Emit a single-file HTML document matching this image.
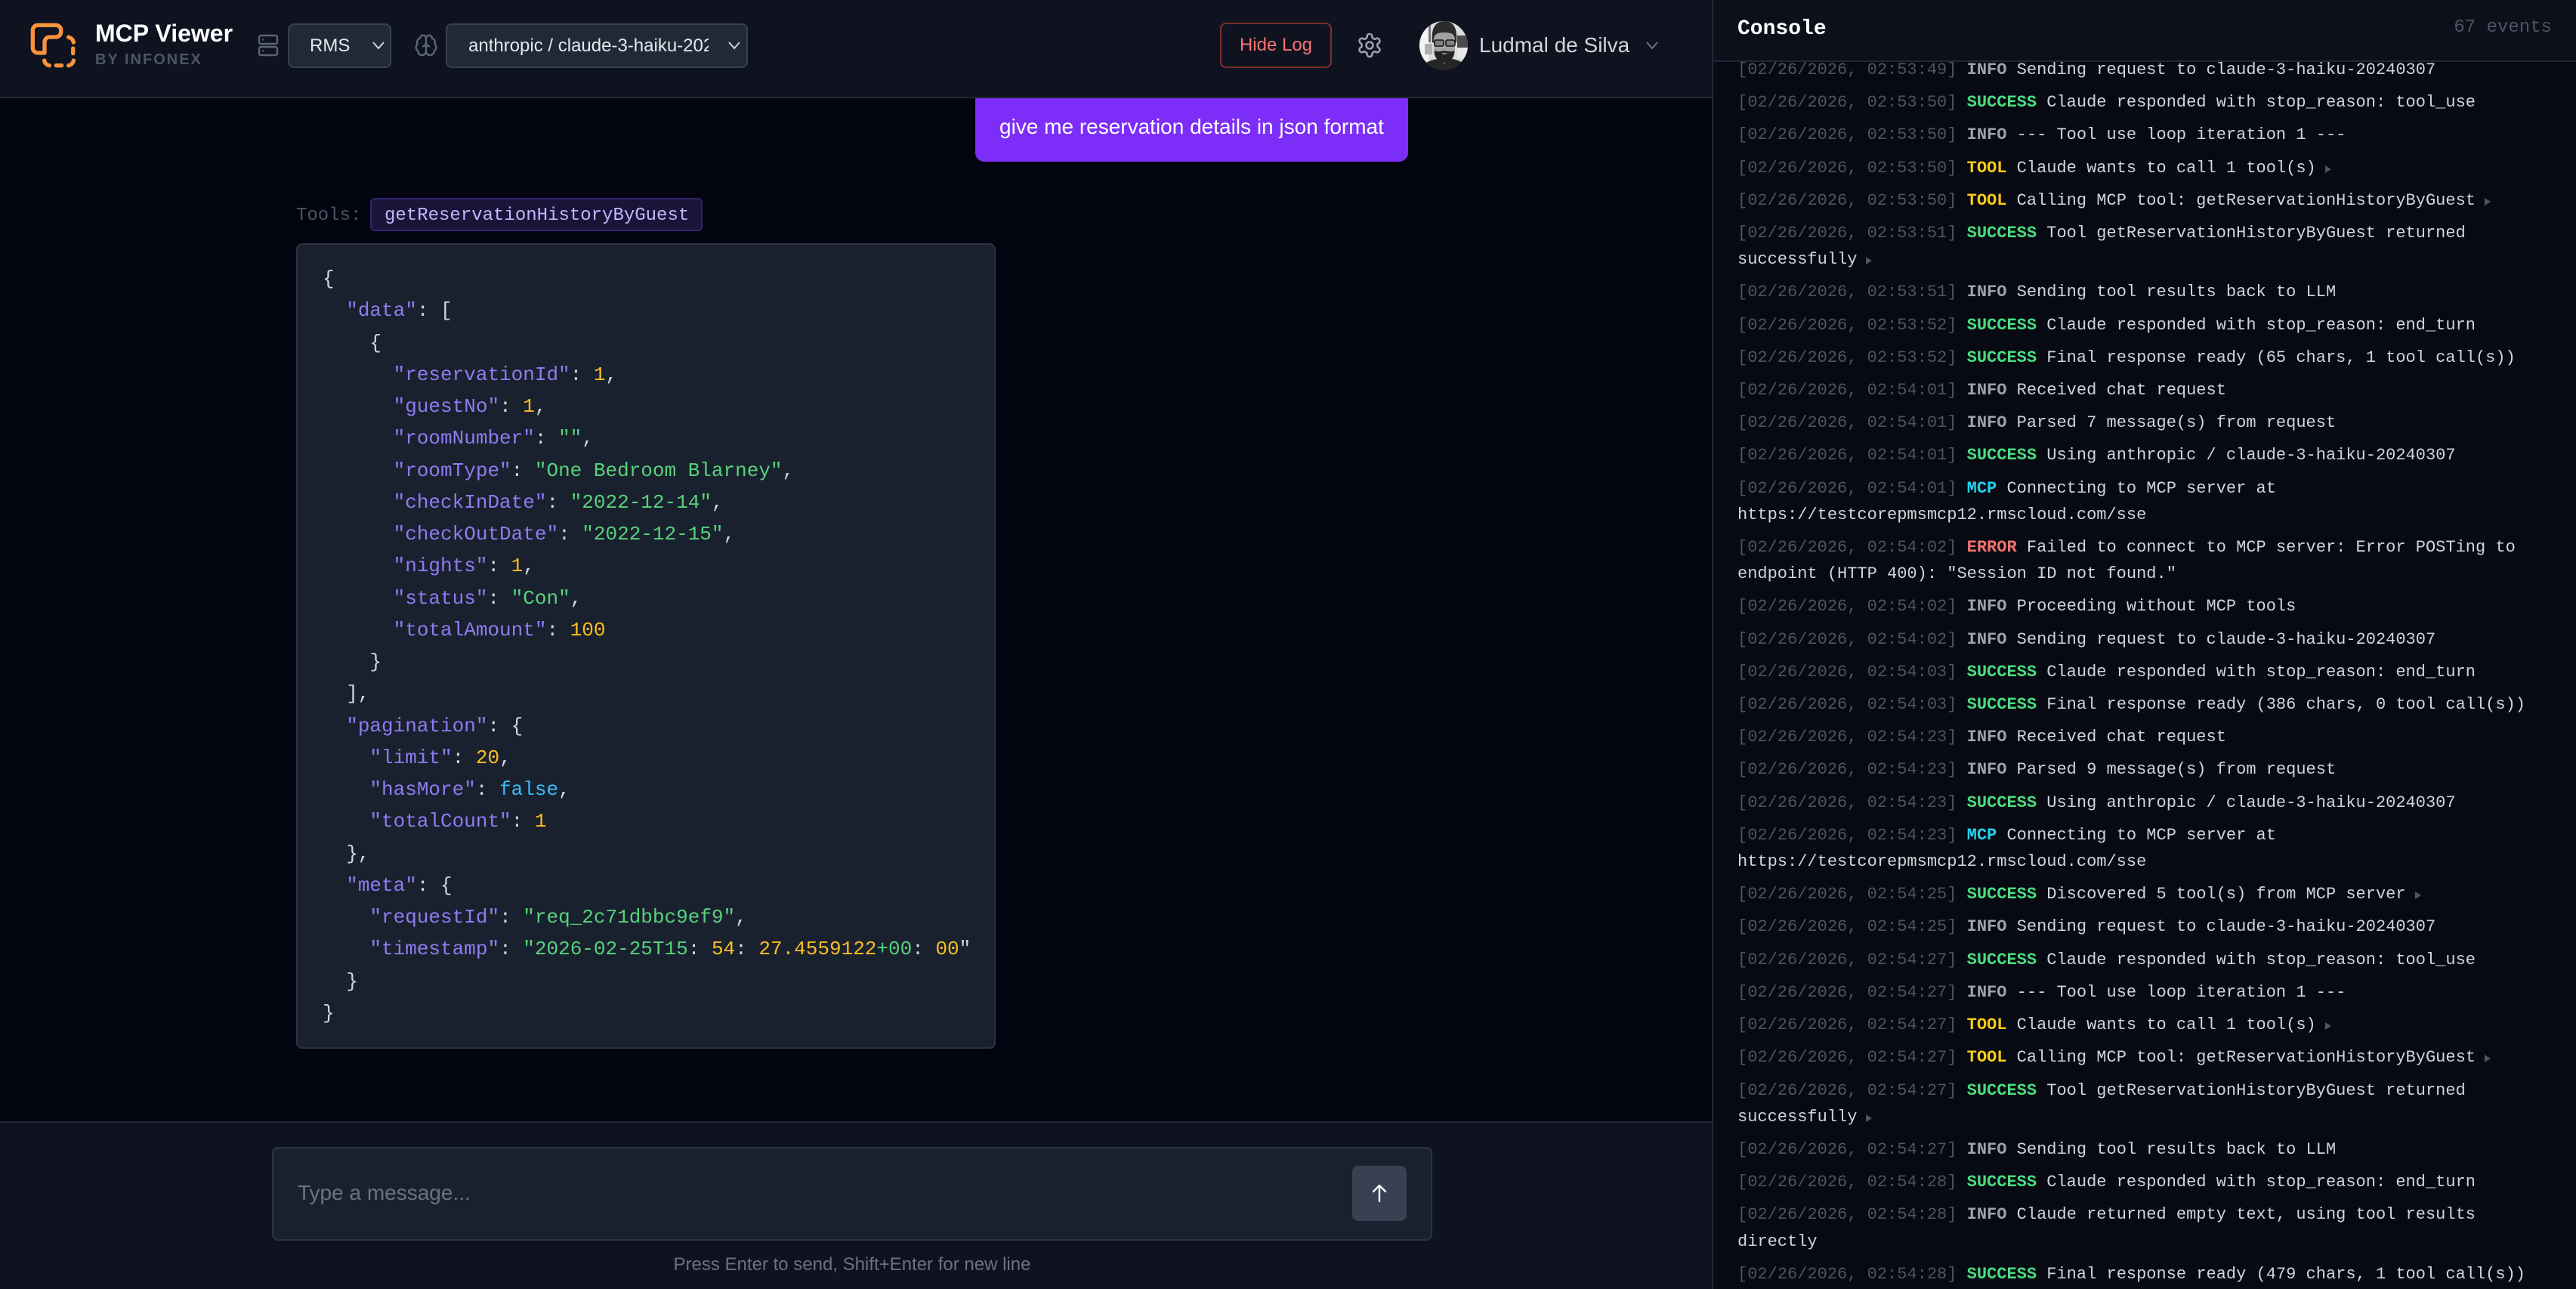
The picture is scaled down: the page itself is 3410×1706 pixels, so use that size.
<!DOCTYPE html>
<html><head><meta charset="utf-8"><style>
*{box-sizing:border-box;margin:0;padding:0}
html,body{width:3410px;height:1706px;overflow:hidden;background:#02040f;font-family:"Liberation Sans",sans-serif}
.a{position:absolute}
.m{font-family:"Liberation Mono",monospace}
.sel{position:absolute;top:31px;height:59px;background:#1f2937;border:2px solid #374151;border-radius:8px;color:#e5e7eb;font-size:24px;line-height:55px;overflow:hidden;white-space:nowrap}
pre{font-family:"Liberation Mono",monospace;font-size:26px;line-height:42.25px;color:#d1d5db}
pre i{font-style:normal;color:#8f7bf2}
pre s{text-decoration:none;color:#57d27d}
pre b{font-weight:normal;color:#fbbf24}
pre u{text-decoration:none;color:#38bdf8}
#log{position:absolute;left:2300px;top:82px;width:1078px;height:1624px;overflow:hidden;font-family:"Liberation Mono",monospace;font-size:22px;line-height:35.2px;color:#d1d5db}
#log div{margin-bottom:8px}
#log div:first-child{margin-top:-7px}
#log em{font-style:normal;color:#4b5563}
#log b{font-weight:bold}
.I{color:#9ca3af}.S{color:#4ade80}.T{color:#facc15}.M{color:#22d3ee}.E{color:#f87171}
.t{display:inline-block;width:0;height:0;border-left:8px solid #4b5563;border-top:5px solid transparent;border-bottom:5px solid transparent;margin-left:12px;vertical-align:-1px}
</style></head><body>

<div class="a" style="left:0;top:0;width:2266px;height:130px;background:#0f1320;border-bottom:2px solid #1f2937"></div>
<div class="a" style="left:0;top:1484px;width:2266px;height:222px;background:#0f1320;border-top:2px solid #1f2937"></div>

<svg class="a" style="left:20px;top:10px" width="120" height="100" viewBox="0 0 360 300" fill="none" stroke="#fb923c" stroke-width="16" stroke-linecap="round" stroke-linejoin="round">
<path d="M117 180H90a20 20 0 0 1-20-20V90a20 20 0 0 1 20-20h72a20 20 0 0 1 20 20v7a20 20 0 0 1-20 20h-25a20 20 0 0 0-20 20z"/>
<path d="M212 118a24 24 0 0 1 20 20M230 162v20M232 210a24 24 0 0 1-20 20M185 230h-22M136 230a24 24 0 0 1-20-20"/>
</svg>
<div class="a" style="left:126px;top:25px;font-size:32px;line-height:38px;font-weight:bold;color:#fff;white-space:nowrap">MCP Viewer</div>
<div class="a" style="left:126px;top:67px;font-size:20px;line-height:24px;font-weight:bold;color:#4b5563;letter-spacing:2px;white-space:nowrap">BY INFONEX</div>

<svg class="a" style="left:340px;top:44px" width="30" height="32" viewBox="0 0 30 32" fill="none" stroke="#5b6472" stroke-width="2.4" stroke-linecap="round">
<rect x="3" y="3" width="24" height="11" rx="2.5"/><rect x="3" y="18" width="24" height="11" rx="2.5"/><path d="M8 8.5h.01M8 23.5h.01"/>
</svg>
<div class="sel" style="left:381px;width:137px;padding-left:27px">RMS</div>
<svg class="a" style="left:491px;top:50px" width="20" height="20" viewBox="0 0 20 20" fill="none" stroke="#d1d5db" stroke-width="2"><path d="M3 6l7 8 7-8"/></svg>

<svg class="a" style="left:548px;top:44px" width="32" height="32" viewBox="0 0 24 24" fill="none" stroke="#5b6472" stroke-width="1.8" stroke-linecap="round" stroke-linejoin="round">
<path d="M12 18V5a3 3 0 1 0-6 .1 4 4 0 0 0-2.5 5.8 4 4 0 0 0 .5 6.6A4 4 0 1 0 12 18z"/><path d="M12 5a3 3 0 1 1 6 .1 4 4 0 0 1 2.500 5.800 4 4 0 0 1-.5 6.600A4 4 0 1 1 12 18"/><path d="M15 13a4 4 0 0 1-3-4 4 4 0 0 1-3 4"/>
</svg>
<div class="sel" style="left:590px;width:400px;padding-left:28px"><span style="display:block;width:318px;overflow:hidden">anthropic / claude-3-haiku-20240307</span></div>
<svg class="a" style="left:962px;top:50px" width="20" height="20" viewBox="0 0 20 20" fill="none" stroke="#d1d5db" stroke-width="2"><path d="M3 6l7 8 7-8"/></svg>

<div class="a" style="left:1615px;top:30px;width:148px;height:60px;border:2px solid #7f2d2d;border-radius:8px;color:#f87171;font-size:24px;line-height:56px;text-align:center">Hide Log</div>

<svg class="a" style="left:1795px;top:42px" width="36" height="36" viewBox="0 0 24 24" fill="none" stroke="#9ca3af" stroke-width="1.700" stroke-linecap="round" stroke-linejoin="round">
<path d="M12.220 2h-.440a2 2 0 0 0-2 2v.180a2 2 0 0 1-1 1.730l-.430.250a2 2 0 0 1-2 0l-.150-.080a2 2 0 0 0-2.730.730l-.220.380a2 2 0 0 0 .730 2.730l.150.100a2 2 0 0 1 1 1.720v.510a2 2 0 0 1-1 1.740l-.150.090a2 2 0 0 0-.730 2.730l.220.380a2 2 0 0 0 2.730.730l.150-.080a2 2 0 0 1 2 0l.430.250a2 2 0 0 1 1 1.730V20a2 2 0 0 0 2 2h.440a2 2 0 0 0 2-2v-.180a2 2 0 0 1 1-1.730l.430-.250a2 2 0 0 1 2 0l.150.080a2 2 0 0 0 2.730-.730l.220-.390a2 2 0 0 0-.730-2.730l-.150-.080a2 2 0 0 1-1-1.740v-.500a2 2 0 0 1 1-1.740l.150-.090a2 2 0 0 0 .730-2.730l-.220-.380a2 2 0 0 0-2.730-.730l-.150.080a2 2 0 0 1-2 0l-.430-.250a2 2 0 0 1-1-1.730V4a2 2 0 0 0-2-2z"/><circle cx="12" cy="12" r="3"/>
</svg>

<svg class="a" style="left:1879px;top:28px" width="64" height="64" viewBox="0 0 64 64">
<defs><clipPath id="c"><circle cx="32" cy="32" r="32"/></clipPath></defs>
<g clip-path="url(#c)">
<rect width="64" height="64" fill="#dcdcdc"/>
<rect x="0" y="0" width="12" height="64" fill="#f4f4f4"/>
<rect x="12" y="2" width="3" height="26" fill="#777"/>
<rect x="50" y="19" width="14" height="16" fill="#4a4a4a"/>
<rect x="50" y="35" width="14" height="14" fill="#e8e8e8"/>
<rect x="7" y="30" width="10" height="14" fill="#b0b0b0"/>
<path d="M17 28C15 8 22 0 33 0s18 8 16 28l-2 1c0-9-3-13-14-13s-14 4-14 13z" fill="#2c2c2c"/>
<path d="M19 25c0-8 5-10 14-10s14 2 14 10v15c0 9-7 14-14 14s-14-5-14-14z" fill="#a2a2a2"/>
<path d="M20 39c4 2 8 1 13 0 5 1 9 2 13 0 1 9-6 16-13 16s-14-7-13-16z" fill="#232323"/>
<rect x="30" y="42" width="6" height="2" fill="#888"/>
<rect x="20" y="25" width="12" height="8" rx="2" fill="#808080" stroke="#151515" stroke-width="1.500"/>
<rect x="35" y="25" width="12" height="8" rx="2" fill="#808080" stroke="#151515" stroke-width="1.500"/>
<path d="M2 64c2-9 14-13 22-14l9 6 10-6c8 1 18 5 20 14z" fill="#262626"/>
</g></svg>
<div class="a" style="left:1958px;top:42px;font-size:28px;line-height:36px;color:#d1d5db;white-space:nowrap">Ludmal de Silva</div>
<svg class="a" style="left:2177px;top:50px" width="20" height="20" viewBox="0 0 20 20" fill="none" stroke="#6b7280" stroke-width="2"><path d="M3 6l7 8 7-8"/></svg>

<div class="a" style="left:1291px;top:130px;width:573px;height:84px;background:#7c2ef8;border-radius:0 0 12px 12px;color:#fff;font-size:28px;line-height:76px;padding-left:32px;white-space:nowrap">give me reservation details in json format</div>

<div class="a m" style="left:392px;top:271px;font-size:24px;line-height:30px;color:#4b5563">Tools:</div>
<div class="a m" style="left:490px;top:262px;width:440px;height:44px;background:#1a1438;border:2px solid #33236d;border-radius:6px;color:#c4b5fd;font-size:24px;line-height:43px;padding-left:17px;white-space:nowrap">getReservationHistoryByGuest</div>

<div class="a" style="left:392px;top:322px;width:926px;height:1066px;background:#1a212e;border:2px solid #2b3442;border-radius:8px"></div>
<pre class="a" style="left:427px;top:348px">{
  <i>"data"</i>: [
    {
      <i>"reservationId"</i>: <b>1</b>,
      <i>"guestNo"</i>: <b>1</b>,
      <i>"roomNumber"</i>: <s>""</s>,
      <i>"roomType"</i>: <s>"One Bedroom Blarney"</s>,
      <i>"checkInDate"</i>: <s>"2022-12-14"</s>,
      <i>"checkOutDate"</i>: <s>"2022-12-15"</s>,
      <i>"nights"</i>: <b>1</b>,
      <i>"status"</i>: <s>"Con"</s>,
      <i>"totalAmount"</i>: <b>100</b>
    }
  ],
  <i>"pagination"</i>: {
    <i>"limit"</i>: <b>20</b>,
    <i>"hasMore"</i>: <u>false</u>,
    <i>"totalCount"</i>: <b>1</b>
  },
  <i>"meta"</i>: {
    <i>"requestId"</i>: <s>"req_2c71dbbc9ef9"</s>,
    <i>"timestamp"</i>: <s>"2026-02-25T15</s>: <b>54</b>: <b>27.4559122</b><s>+00</s>: <b>00</b>"
  }
}</pre>

<div class="a" style="left:360px;top:1518px;width:1536px;height:124px;background:#1a212e;border:2px solid #2b3442;border-radius:8px"></div>
<div class="a" style="left:394px;top:1561px;font-size:28px;line-height:36px;color:#6b7280">Type a message...</div>
<div class="a" style="left:1790px;top:1543px;width:72px;height:73px;background:#374151;border-radius:8px"></div>
<svg class="a" style="left:1812px;top:1565px" width="28" height="28" viewBox="0 0 28 28" fill="none" stroke="#fff" stroke-width="2.400" stroke-linecap="round" stroke-linejoin="round"><path d="M14 25V4M6 12l8-8 8 8"/></svg>
<div class="a" style="left:0;top:1659px;width:2256px;text-align:center;font-size:24px;line-height:30px;color:#6b7280">Press Enter to send, Shift+Enter for new line</div>

<div class="a" style="left:2266px;top:0;width:1144px;height:1706px;background:#070a12;border-left:2px solid #1f2937"></div>
<div class="a" style="left:2268px;top:0;width:1142px;height:82px;background:#0c101b;border-bottom:2px solid #1f2937"></div>
<div class="a m" style="left:2300px;top:22px;font-size:28px;line-height:34px;font-weight:bold;color:#fff">Console</div>
<div class="a m" style="right:32px;top:22px;font-size:24px;line-height:30px;color:#4b5563">67 events</div>

<div id="log">
<div><em>[02/26/2026, 02:53:49]</em> <b class="I">INFO</b> Sending request to claude-3-haiku-20240307</div>
<div><em>[02/26/2026, 02:53:50]</em> <b class="S">SUCCESS</b> Claude responded with stop_reason: tool_use</div>
<div><em>[02/26/2026, 02:53:50]</em> <b class="I">INFO</b> --- Tool use loop iteration 1 ---</div>
<div><em>[02/26/2026, 02:53:50]</em> <b class="T">TOOL</b> Claude wants to call 1 tool(s)<span class="t"></span></div>
<div><em>[02/26/2026, 02:53:50]</em> <b class="T">TOOL</b> Calling MCP tool: getReservationHistoryByGuest<span class="t"></span></div>
<div><em>[02/26/2026, 02:53:51]</em> <b class="S">SUCCESS</b> Tool getReservationHistoryByGuest returned successfully<span class="t"></span></div>
<div><em>[02/26/2026, 02:53:51]</em> <b class="I">INFO</b> Sending tool results back to LLM</div>
<div><em>[02/26/2026, 02:53:52]</em> <b class="S">SUCCESS</b> Claude responded with stop_reason: end_turn</div>
<div><em>[02/26/2026, 02:53:52]</em> <b class="S">SUCCESS</b> Final response ready (65 chars, 1 tool call(s))</div>
<div><em>[02/26/2026, 02:54:01]</em> <b class="I">INFO</b> Received chat request</div>
<div><em>[02/26/2026, 02:54:01]</em> <b class="I">INFO</b> Parsed 7 message(s) from request</div>
<div><em>[02/26/2026, 02:54:01]</em> <b class="S">SUCCESS</b> Using anthropic / claude-3-haiku-20240307</div>
<div><em>[02/26/2026, 02:54:01]</em> <b class="M">MCP</b> Connecting to MCP server at https://testcorepmsmcp12.rmscloud.com/sse</div>
<div><em>[02/26/2026, 02:54:02]</em> <b class="E">ERROR</b> Failed to connect to MCP server: Error POSTing to endpoint (HTTP 400): "Session ID not found."</div>
<div><em>[02/26/2026, 02:54:02]</em> <b class="I">INFO</b> Proceeding without MCP tools</div>
<div><em>[02/26/2026, 02:54:02]</em> <b class="I">INFO</b> Sending request to claude-3-haiku-20240307</div>
<div><em>[02/26/2026, 02:54:03]</em> <b class="S">SUCCESS</b> Claude responded with stop_reason: end_turn</div>
<div><em>[02/26/2026, 02:54:03]</em> <b class="S">SUCCESS</b> Final response ready (386 chars, 0 tool call(s))</div>
<div><em>[02/26/2026, 02:54:23]</em> <b class="I">INFO</b> Received chat request</div>
<div><em>[02/26/2026, 02:54:23]</em> <b class="I">INFO</b> Parsed 9 message(s) from request</div>
<div><em>[02/26/2026, 02:54:23]</em> <b class="S">SUCCESS</b> Using anthropic / claude-3-haiku-20240307</div>
<div><em>[02/26/2026, 02:54:23]</em> <b class="M">MCP</b> Connecting to MCP server at https://testcorepmsmcp12.rmscloud.com/sse</div>
<div><em>[02/26/2026, 02:54:25]</em> <b class="S">SUCCESS</b> Discovered 5 tool(s) from MCP server<span class="t"></span></div>
<div><em>[02/26/2026, 02:54:25]</em> <b class="I">INFO</b> Sending request to claude-3-haiku-20240307</div>
<div><em>[02/26/2026, 02:54:27]</em> <b class="S">SUCCESS</b> Claude responded with stop_reason: tool_use</div>
<div><em>[02/26/2026, 02:54:27]</em> <b class="I">INFO</b> --- Tool use loop iteration 1 ---</div>
<div><em>[02/26/2026, 02:54:27]</em> <b class="T">TOOL</b> Claude wants to call 1 tool(s)<span class="t"></span></div>
<div><em>[02/26/2026, 02:54:27]</em> <b class="T">TOOL</b> Calling MCP tool: getReservationHistoryByGuest<span class="t"></span></div>
<div><em>[02/26/2026, 02:54:27]</em> <b class="S">SUCCESS</b> Tool getReservationHistoryByGuest returned successfully<span class="t"></span></div>
<div><em>[02/26/2026, 02:54:27]</em> <b class="I">INFO</b> Sending tool results back to LLM</div>
<div><em>[02/26/2026, 02:54:28]</em> <b class="S">SUCCESS</b> Claude responded with stop_reason: end_turn</div>
<div><em>[02/26/2026, 02:54:28]</em> <b class="I">INFO</b> Claude returned empty text, using tool results directly</div>
<div><em>[02/26/2026, 02:54:28]</em> <b class="S">SUCCESS</b> Final response ready (479 chars, 1 tool call(s))</div>
</div>
</body></html>
